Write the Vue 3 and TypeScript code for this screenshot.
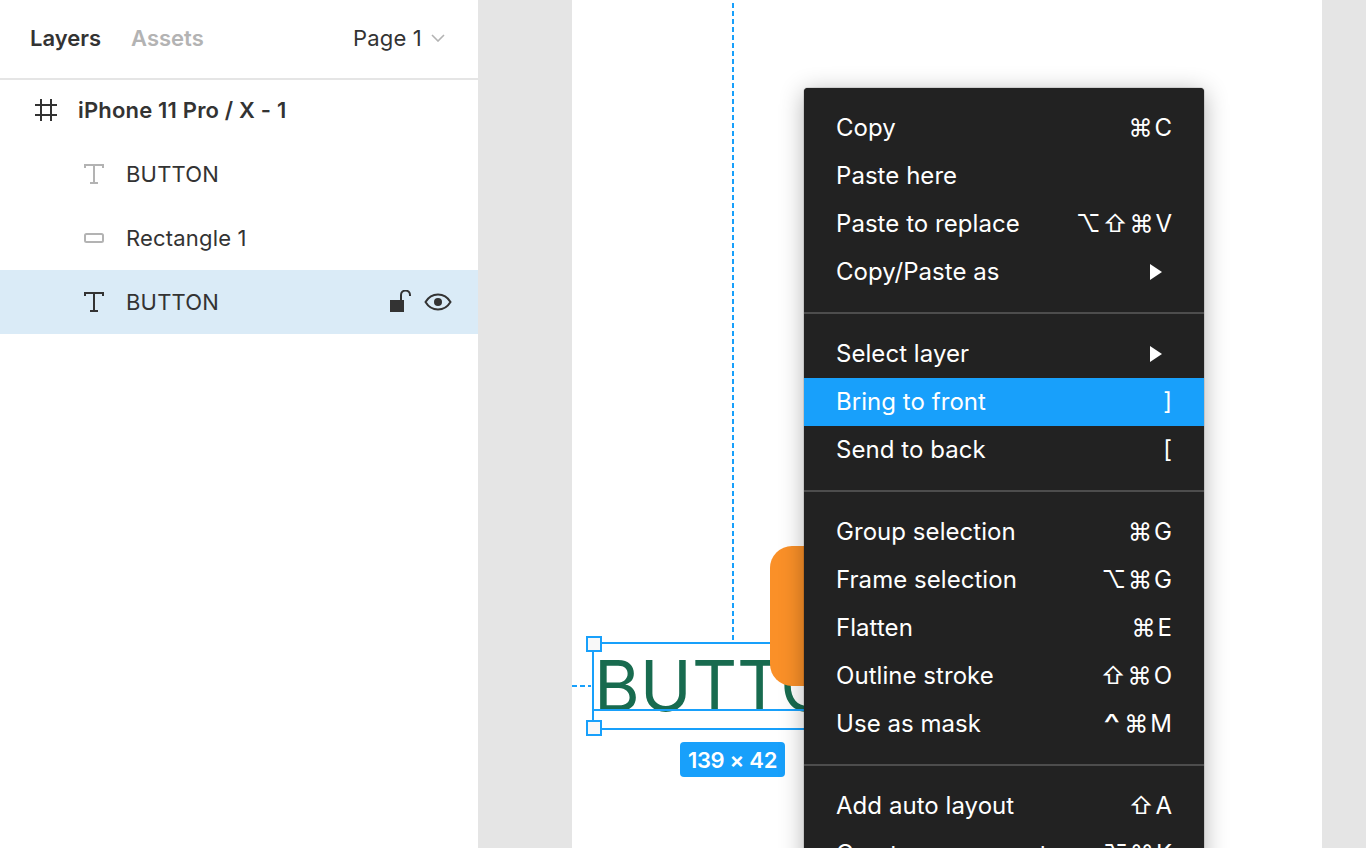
<script setup lang="ts">
interface Item { label: string; keys?: string[]; arrow?: boolean; active?: boolean }
const groups: Item[][] = [
  [
    { label: 'Copy', keys: ['⌘', 'C'] },
    { label: 'Paste here' },
    { label: 'Paste to replace', keys: ['⌥', '⇧', '⌘', 'V'] },
    { label: 'Copy/Paste as', arrow: true },
  ],
  [
    { label: 'Select layer', arrow: true },
    { label: 'Bring to front', keys: [']'], active: true },
    { label: 'Send to back', keys: ['['] },
  ],
  [
    { label: 'Group selection', keys: ['⌘', 'G'] },
    { label: 'Frame selection', keys: ['⌥', '⌘', 'G'] },
    { label: 'Flatten', keys: ['⌘', 'E'] },
    { label: 'Outline stroke', keys: ['⇧', '⌘', 'O'] },
    { label: 'Use as mask', keys: ['^', '⌘', 'M'] },
  ],
  [
    { label: 'Add auto layout', keys: ['⇧', 'A'] },
    { label: 'Create component', keys: ['⌥', '⌘', 'K'] },
  ],
]
</script>

<template>
  <div class="app">
    <aside class="sidebar">
      <header class="tabs">
        <span class="tab on">Layers</span>
        <span class="tab off">Assets</span>
        <span class="page">Page 1</span>
        <svg class="chev" width="14" height="8" viewBox="0 0 14 8"><path d="M1 1l6 6 6-6" fill="none" stroke="#b3b3b3" stroke-width="1.6" /></svg>
      </header>
      <div class="row frame-row">
        <svg class="frame-ic" width="24" height="24" viewBox="0 0 24 24"><path d="M7 1v22M17 1v22M1 7h22M1 17h22" fill="none" stroke="#333" stroke-width="2" /></svg>
        <span class="frame-name">iPhone 11 Pro / X - 1</span>
      </div>
      <div class="row child">
        <svg class="ic" width="22" height="22" viewBox="0 0 22 22"><path d="M2 5V2h18v3M11 2v18M7 20h8" fill="none" stroke="#b3b3b3" stroke-width="2" /></svg>
        <span>BUTTON</span>
      </div>
      <div class="row child">
        <svg class="ic" width="22" height="22" viewBox="0 0 22 22"><rect x="2" y="7" width="18" height="8" rx="1.5" fill="none" stroke="#b3b3b3" stroke-width="2" /></svg>
        <span>Rectangle 1</span>
      </div>
      <div class="row child selected">
        <svg class="ic" width="22" height="22" viewBox="0 0 22 22"><path d="M2 5V2h18v3M11 2v18M7 20h8" fill="none" stroke="#333" stroke-width="2" /></svg>
        <span>BUTTON</span>
        <svg class="lock" width="22" height="24" viewBox="0 0 22 24"><rect x="0" y="10" width="14" height="12" fill="#333" /><path d="M11 10V5a4.5 4.5 0 0 1 9 0v1" fill="none" stroke="#333" stroke-width="2" /></svg>
        <svg class="eye" width="28" height="18" viewBox="0 0 28 18"><path d="M1.5 9C4.5 4 9 1.5 14 1.5S23.500 4 26.500 9C23.500 14 19 16.500 14 16.500S4.500 14 1.500 9Z" fill="none" stroke="#333" stroke-width="2" /><circle cx="14" cy="9" r="4" fill="#333" /></svg>
      </div>
    </aside>

    <main class="canvas">
      <div class="frame">
        <div class="guide-v"></div>
        <div class="guide-h"></div>
        <div class="btn-text">BUTTON</div>
        <div class="bbox"></div>
        <div class="baseline"></div>
        <div class="handle h-top"></div>
        <div class="handle h-bottom"></div>
        <div class="orange"></div>
        <div class="size">139 × 42</div>
      </div>

      <nav class="menu">
        <section v-for="(group, g) in groups" :key="g" class="group">
          <div v-for="item in group" :key="item.label" class="item" :class="{ active: item.active }">
            <span>{{ item.label }}</span>
            <span v-if="item.keys" class="keys">
              <span v-for="k in item.keys" :key="k" :class="{ caret: k === '^' }">{{ k }}</span>
            </span>
            <svg v-if="item.arrow" class="arrow" width="12" height="16" viewBox="0 0 12 16"><path d="M0 0l12 8-12 8z" fill="#fff" /></svg>
          </div>
        </section>
      </nav>
    </main>
  </div>
</template>

<style scoped>
.app {
  display: flex;
  width: 1366px;
  height: 848px;
  overflow: hidden;
  font-family: Inter, "Liberation Sans", sans-serif;
  color: #333;
}
.sidebar {
  width: 478px;
  flex: none;
  background: #fff;
  font-size: 22px;
  letter-spacing: 0.18px;
}
.tabs {
  display: flex;
  align-items: center;
  box-sizing: border-box;
  height: 80px;
  padding: 0 33px 2px 30px;
  border-bottom: 2px solid #e5e5e5;
  letter-spacing: 0;
}
.tab { font-weight: 600; margin-right: 30px; }
.off { color: #b3b3b3; }
.page { margin-left: auto; margin-right: 9px; letter-spacing: 0.18px; }
.row {
  display: flex;
  align-items: center;
  height: 64px;
}
.frame-row {
  height: 62px;
  padding: 0 0 2px 34px;
  box-sizing: border-box;
}
.frame-ic { margin-right: 20px; }
.frame-name { font-weight: 600; }
.child { padding-left: 83px; }
.ic { margin-right: 21px; }
.selected { background: #daebf7; }
.lock { margin-left: auto; margin-right: 12px; }
.eye { margin-right: 26px; }
.canvas {
  position: relative;
  flex: 1;
  display: flex;
  padding: 0 44px 0 94px;
  background: #e5e5e5;
}
.frame {
  position: relative;
  flex: 1;
  background: #fff;
}
.guide-v {
  position: absolute;
  left: 160px;
  top: 0;
  width: 2px;
  height: 640px;
  background: repeating-linear-gradient(to top, #18a0fb 0 5px, transparent 5px 8px);
}
.guide-h {
  position: absolute;
  left: 0;
  top: 685px;
  width: 19px;
  height: 2px;
  background: repeating-linear-gradient(to right, #18a0fb 0 5px, transparent 5px 8px);
}
.btn-text {
  position: absolute;
  left: 22px;
  top: 644px;
  font-size: 70px;
  line-height: 84px;
  color: #186b4f;
  white-space: nowrap;
}
.bbox {
  position: absolute;
  left: 20px;
  top: 642px;
  width: 278px;
  height: 84px;
  border: 2px solid #18a0fb;
}
.baseline {
  position: absolute;
  left: 20px;
  top: 709px;
  width: 278px;
  height: 2px;
  background: #18a0fb;
}
.handle {
  position: absolute;
  left: 14px;
  width: 12px;
  height: 12px;
  background: #f8f8f8;
  border: 2px solid #18a0fb;
}
.h-top { top: 636px; }
.h-bottom { top: 720px; }
.orange {
  position: absolute;
  left: 198px;
  top: 546px;
  width: 120px;
  height: 140px;
  border-radius: 22px;
  background: #fa9028;
}
.size {
  position: absolute;
  left: 108px;
  top: 742px;
  width: 105px;
  height: 35px;
  border-radius: 4px;
  background: #18a0fb;
  color: #fff;
  font-size: 22px;
  font-weight: 600;
  letter-spacing: -0.3px;
  line-height: 36px;
  text-align: center;
}
.menu {
  position: absolute;
  left: 326px;
  top: 88px;
  width: 400px;
  background: #222;
  color: #fff;
  border-radius: 4px;
  font-size: 24px;
  letter-spacing: 0.05px;
  box-shadow: 0 0 1px #000, 0 4px 24px rgba(0, 0, 0, 0.3);
}
.group {
  padding: 16px 0;
  border-bottom: 2px solid #4d4d4d;
}
.group:last-child { border-bottom: none; }
.item {
  display: flex;
  align-items: center;
  justify-content: space-between;
  box-sizing: border-box;
  height: 48px;
  padding: 0 32px 2px;
}
.active { background: #18a0fb; }
.keys {
  display: flex;
  gap: 2px;
  letter-spacing: 0;
}
.caret {
  transform: scale(1.5, 1.1);
  margin: 0 5px 0 2px;
}
.arrow { margin-right: 10px; margin-top: 2px; }
</style>
